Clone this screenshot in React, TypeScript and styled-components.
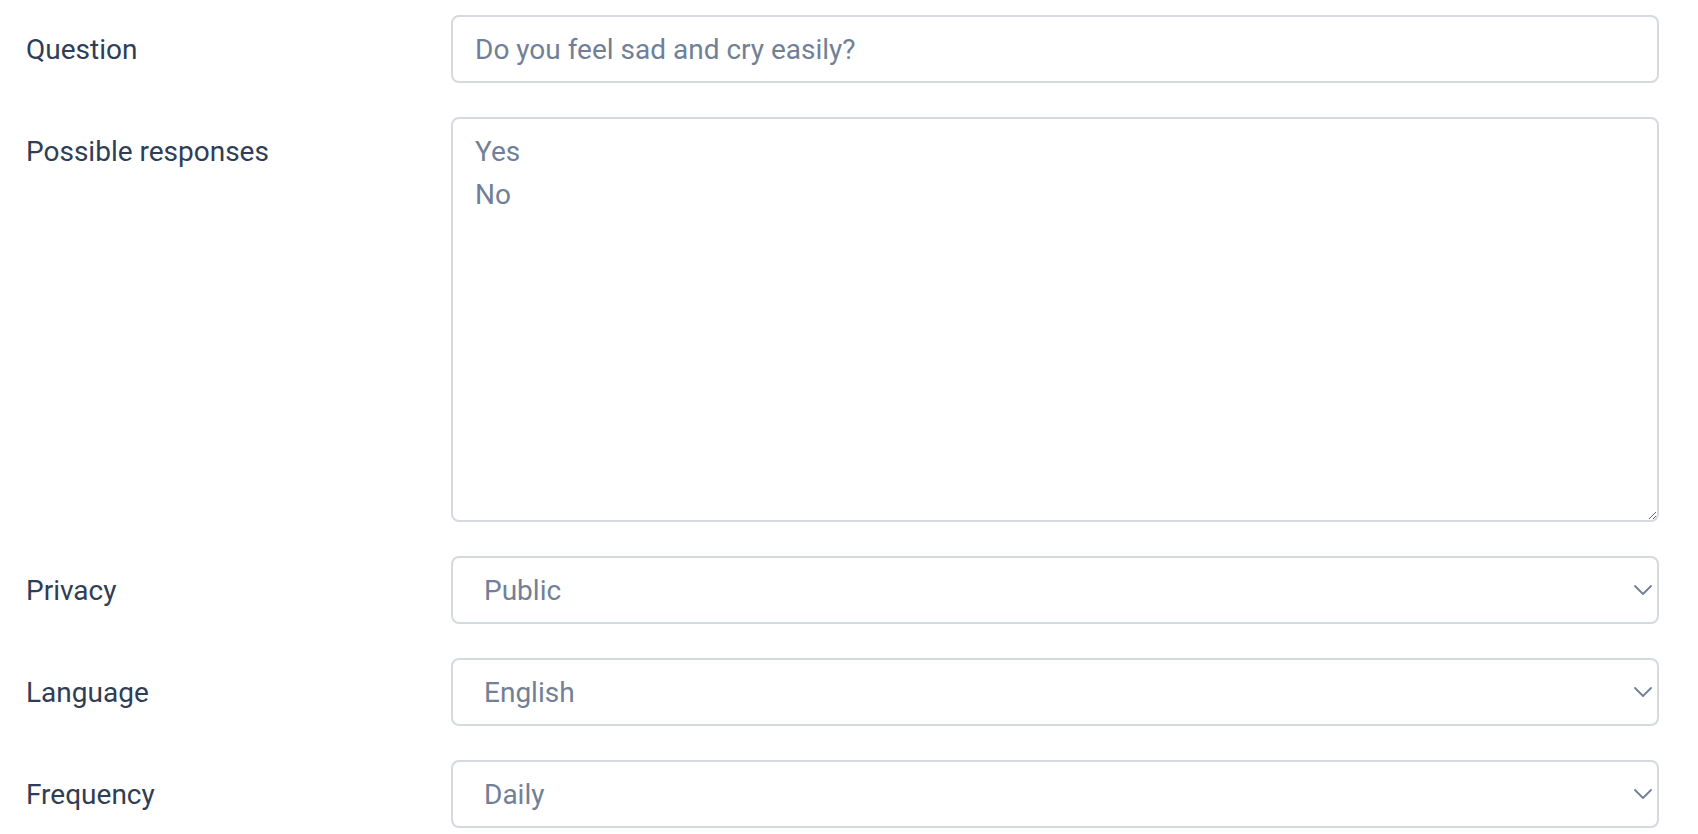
import styled, { createGlobalStyle } from 'styled-components';

const GlobalStyle = createGlobalStyle`
  html, body {
    margin: 0;
    padding: 0;
    background: #ffffff;
  }
  body {
    font-family: Roboto, "Noto Sans", "Liberation Sans", sans-serif;
  }
`;

const Form = styled.form`
  display: grid;
  grid-template-columns: 425px 1fr;
  row-gap: 34px;
  padding: 15px 39px 0 26px;
`;

const Label = styled.label<{ $top?: boolean }>`
  display: flex;
  align-items: ${(p) => (p.$top ? 'flex-start' : 'center')};
  padding-top: ${(p) => (p.$top ? '13px' : '0')};
  font-size: 28px;
  color: #2f3d55;
  line-height: 43px;
`;

const fieldBase = `
  box-sizing: border-box;
  width: 100%;
  border: 2px solid #d6dae0;
  border-radius: 8px;
  background: #ffffff;
  font-family: Roboto, "Noto Sans", "Liberation Sans", sans-serif;
  font-size: 28px;
  color: #718096;
  outline: none;
`;

const TextInput = styled.input`
  ${fieldBase}
  height: 68px;
  padding: 0 22px;
`;

const TextArea = styled.textarea`
  ${fieldBase}
  display: block;
  height: 405px;
  padding: 11px 22px;
  line-height: 43px;
  resize: vertical;
`;

const SelectWrap = styled.div`
  position: relative;
`;

const Select = styled.select`
  ${fieldBase}
  display: block;
  height: 68px;
  padding: 0 60px 0 31px;
  appearance: none;
  -webkit-appearance: none;
`;

const Chevron = styled.svg`
  position: absolute;
  right: 7px;
  top: 50%;
  width: 18px;
  height: 10px;
  margin-top: -5px;
  pointer-events: none;
`;

type SelectFieldProps = { value: string; options: string[] };

function SelectField({ value, options }: SelectFieldProps) {
  return (
    <SelectWrap>
      <Select defaultValue={value}>
        {options.map((o) => (
          <option key={o} value={o}>
            {o}
          </option>
        ))}
      </Select>
      <Chevron viewBox="0 0 18 10" fill="none">
        <polyline
          points="1,1 9,9 17,1"
          stroke="#718096"
          strokeWidth="1.8"
          strokeLinecap="round"
          strokeLinejoin="round"
        />
      </Chevron>
    </SelectWrap>
  );
}

export default function App() {
  return (
    <>
      <GlobalStyle />
      <Form onSubmit={(e) => e.preventDefault()}>
        <Label>Question</Label>
        <TextInput defaultValue="Do you feel sad and cry easily?" />

        <Label $top>Possible responses</Label>
        <TextArea defaultValue={'Yes\nNo'} />

        <Label>Privacy</Label>
        <SelectField value="Public" options={['Public', 'Private']} />

        <Label>Language</Label>
        <SelectField value="English" options={['English', 'Français', 'Español']} />

        <Label>Frequency</Label>
        <SelectField value="Daily" options={['Daily', 'Weekly', 'Monthly']} />
      </Form>
    </>
  );
}
